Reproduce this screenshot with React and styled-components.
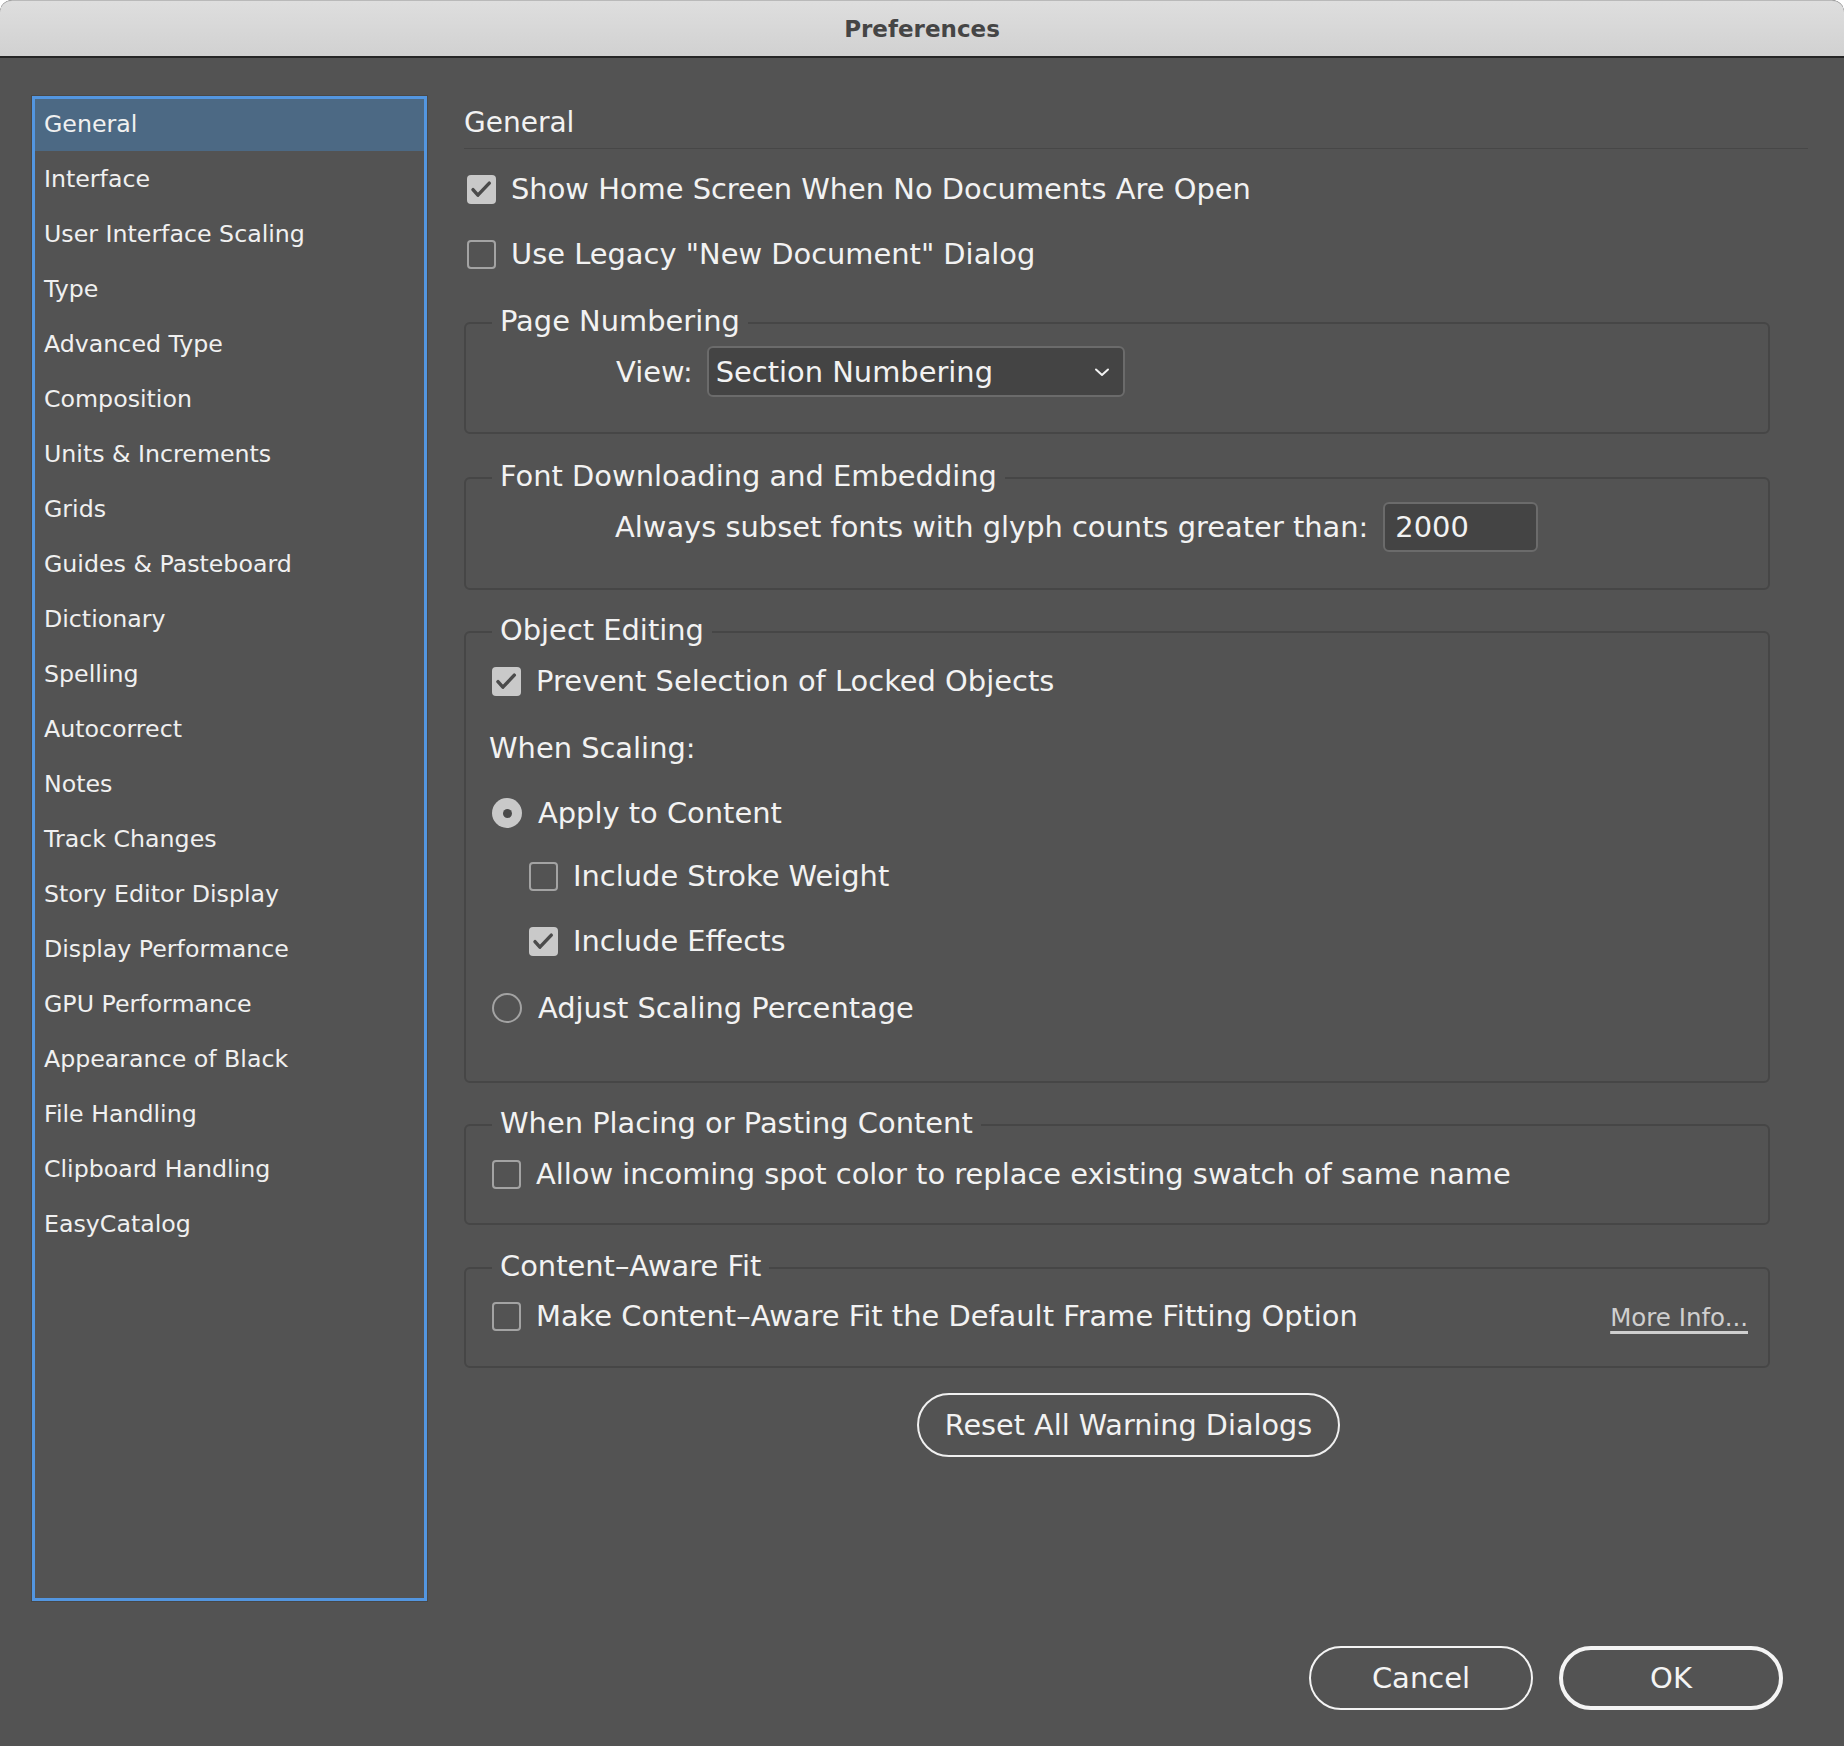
import React from 'react';
import styled, { createGlobalStyle } from 'styled-components';

const GlobalStyle = createGlobalStyle`
  html, body {
    margin: 0;
    padding: 0;
    background: #ffffff;
  }
  body {
    font-family: "DejaVu Sans", "Liberation Sans", sans-serif;
    color: #f2f2f2;
  }
  * {
    box-sizing: border-box;
  }
`;

const sections = [
  'General',
  'Interface',
  'User Interface Scaling',
  'Type',
  'Advanced Type',
  'Composition',
  'Units & Increments',
  'Grids',
  'Guides & Pasteboard',
  'Dictionary',
  'Spelling',
  'Autocorrect',
  'Notes',
  'Track Changes',
  'Story Editor Display',
  'Display Performance',
  'GPU Performance',
  'Appearance of Black',
  'File Handling',
  'Clipboard Handling',
  'EasyCatalog',
];

const CheckIcon = () => (
  <svg width="29" height="29" viewBox="0 0 16 16" fill="none">
    <path d="M3.3 8.1 L6 11.1 L12.3 4.5" stroke="#4b4b4b" strokeWidth="1.9" strokeLinecap="round" strokeLinejoin="round" />
  </svg>
);

const Chevron = () => (
  <svg width="18" height="12" viewBox="0 0 18 12" fill="none">
    <path d="M3 3.5 L9 9 L15 3.5" stroke="#f2f2f2" strokeWidth="2" strokeLinecap="round" strokeLinejoin="round" />
  </svg>
);

const Checkbox = ({ checked }) => (
  <Box $checked={checked}>{checked && <CheckIcon />}</Box>
);

const Option = ({ checked, radio, indent, mt, children }) => (
  <Row $indent={indent} $mt={mt}>
    {radio ? <Radio $checked={checked} /> : <Checkbox checked={checked} />}
    <span>{children}</span>
  </Row>
);

const App = () => {
  return (
    <>
      <GlobalStyle />
      <Window>
        <TitleBar>Preferences</TitleBar>
        <Body>
          <Sidebar>
            {sections.map((name, index) => (
              <SidebarItem key={name} $selected={index === 0}>
                {name}
              </SidebarItem>
            ))}
          </Sidebar>

          <Main>
            <Heading>General</Heading>
            <Option checked indent={3} mt={20}>Show Home Screen When No Documents Are Open</Option>
            <Option indent={3} mt={25}>Use Legacy "New Document" Dialog</Option>

            <Group $mt={48} $pt={22} $pb={35} $pl={150}>
              <Legend>Page Numbering</Legend>
              <FieldRow>
                <span>View:</span>
                <Select>
                  <span>Section Numbering</span>
                  <Chevron />
                </Select>
              </FieldRow>
            </Group>

            <Group $mt={43} $pt={23} $pb={36} $pl={149}>
              <Legend>Font Downloading and Embedding</Legend>
              <FieldRow $gap={15}>
                <span>Always subset fonts with glyph counts greater than:</span>
                <NumberField>2000</NumberField>
              </FieldRow>
            </Group>

            <Group $mt={41} $pt={28} $pb={53} $pl={26}>
              <Legend>Object Editing</Legend>
              <Option checked>Prevent Selection of Locked Objects</Option>
              <Label>When Scaling:</Label>
              <Option radio checked mt={25}>Apply to Content</Option>
              <Option indent={37} mt={23}>Include Stroke Weight</Option>
              <Option indent={37} checked mt={25}>Include Effects</Option>
              <Option radio mt={27}>Adjust Scaling Percentage</Option>
            </Group>

            <Group $mt={41} $pt={28} $pb={29} $pl={26}>
              <Legend>When Placing or Pasting Content</Legend>
              <Option>Allow incoming spot color to replace existing swatch of same name</Option>
            </Group>

            <Group $mt={42} $pt={27} $pb={30} $pl={26}>
              <Legend>Content–Aware Fit</Legend>
              <SplitRow>
                <Option>Make Content–Aware Fit the Default Frame Fitting Option</Option>
                <MoreInfo>More Info...</MoreInfo>
              </SplitRow>
            </Group>

            <ResetButton>Reset All Warning Dialogs</ResetButton>
          </Main>
        </Body>

        <Footer>
          <PillButton>Cancel</PillButton>
          <PillButton $primary>OK</PillButton>
        </Footer>
      </Window>
    </>
  );
};

// Styled Components
const Window = styled.div`
  width: 1844px;
  height: 1746px;
  background: #535353;
  display: flex;
  flex-direction: column;
  overflow: hidden;
  border-radius: 12px 12px 0 0;
`;

const TitleBar = styled.div`
  height: 58px;
  flex-shrink: 0;
  display: flex;
  align-items: center;
  justify-content: center;
  background: linear-gradient(#dedede, #d1d1d1);
  border-top: 1px solid #b9b9b9;
  border-bottom: 2px solid #262626;
  border-radius: 12px 12px 0 0;
  font-size: 23px;
  font-weight: bold;
  color: #454545;
`;

const Body = styled.div`
  display: flex;
  align-items: flex-start;
  padding: 38px 0 0 32px;
`;

const Sidebar = styled.div`
  width: 395px;
  height: 1505px;
  flex-shrink: 0;
  border: 3px solid #5396e0;
  box-shadow: 0 0 0 1px #484848;
  display: flex;
  flex-direction: column;
`;

const SidebarItem = styled.div`
  height: 52px;
  margin-bottom: 3px;
  padding: 0 0 3px 9px;
  display: flex;
  align-items: center;
  font-size: 23.7px;
  color: #f0f0f0;
  white-space: nowrap;
  background: ${({ $selected }) => ($selected ? '#4c6984' : 'transparent')};
`;

const Main = styled.div`
  width: 1344px;
  margin-left: 37px;
  display: flex;
  flex-direction: column;
  align-items: flex-start;
  font-size: 28.9px;
`;

const Heading = styled.div`
  width: 100%;
  height: 53px;
  display: flex;
  align-items: center;
  font-size: 28px;
  border-bottom: 1px solid #474747;
`;

const Row = styled.div`
  height: 40px;
  display: flex;
  align-items: center;
  gap: 15px;
  white-space: nowrap;
  margin-top: ${({ $mt }) => $mt || 0}px;
  margin-left: ${({ $indent }) => $indent || 0}px;
`;

const Box = styled.span`
  width: 29px;
  height: 29px;
  flex-shrink: 0;
  border-radius: 4px;
  display: flex;
  align-items: center;
  justify-content: center;
  background: ${({ $checked }) => ($checked ? '#c9c9c9' : 'transparent')};
  border: ${({ $checked }) => ($checked ? 'none' : '2px solid #a3a3a3')};
`;

const Radio = styled.span`
  width: 30px;
  height: 30px;
  flex-shrink: 0;
  border-radius: 50%;
  position: relative;
  background: ${({ $checked }) => ($checked ? '#c9c9c9' : 'transparent')};
  border: ${({ $checked }) => ($checked ? 'none' : '2px solid #a3a3a3')};
  margin-right: 1px;

  &::after {
    content: '';
    display: ${({ $checked }) => ($checked ? 'block' : 'none')};
    position: absolute;
    left: 50%;
    top: 50%;
    width: 9px;
    height: 9px;
    margin: -4.5px 0 0 -4.5px;
    border-radius: 50%;
    background: #4a4a4a;
  }
`;

const Group = styled.div`
  position: relative;
  width: 1306px;
  margin-top: ${({ $mt }) => $mt}px;
  padding: ${({ $pt }) => $pt}px 20px ${({ $pb }) => $pb}px ${({ $pl }) => $pl}px;
  border: 2px solid #464646;
  border-radius: 6px;
  display: flex;
  flex-direction: column;
  align-items: flex-start;
`;

const Legend = styled.div`
  position: absolute;
  top: -20px;
  left: 26px;
  height: 34px;
  line-height: 34px;
  padding: 0 8px;
  background: #535353;
  white-space: nowrap;
`;

const FieldRow = styled.div`
  display: flex;
  align-items: center;
  gap: ${({ $gap }) => $gap || 14}px;
  white-space: nowrap;
`;

const Select = styled.div`
  width: 418px;
  height: 51px;
  padding: 0 12px 0 7px;
  display: flex;
  align-items: center;
  justify-content: space-between;
  background: #444444;
  border: 2px solid #6b6b6b;
  border-radius: 6px;
`;

const NumberField = styled.div`
  width: 155px;
  height: 50px;
  padding-left: 10px;
  display: flex;
  align-items: center;
  background: #444444;
  border: 2px solid #6b6b6b;
  border-radius: 6px;
`;

const Label = styled.div`
  height: 40px;
  margin: 27px 0 0 -3px;
  display: flex;
  align-items: center;
`;

const SplitRow = styled.div`
  width: 100%;
  display: flex;
  align-items: center;
  justify-content: space-between;
`;

const MoreInfo = styled.span`
  font-size: 24.5px;
  color: #cfcfcf;
  text-decoration: underline;
  text-decoration-thickness: 3px;
  text-underline-offset: 5px;
  margin-top: 2px;
`;

const ResetButton = styled.button`
  margin: 25px 0 0 453px;
  width: 423px;
  height: 64px;
  border: 2px solid #f0f0f0;
  border-radius: 32px;
  background: transparent;
  color: #f2f2f2;
  font-family: inherit;
  font-size: 28.7px;
  padding: 0;
`;

const Footer = styled.div`
  margin-top: 45px;
  padding-right: 61px;
  display: flex;
  justify-content: flex-end;
  gap: 26px;
`;

const PillButton = styled.button`
  width: 224px;
  height: 64px;
  border: ${({ $primary }) => ($primary ? '4px' : '2px')} solid #f4f4f4;
  border-radius: 32px;
  background: transparent;
  color: #f4f4f4;
  font-family: inherit;
  font-size: 29px;
  padding: 0;
`;

export default App;
